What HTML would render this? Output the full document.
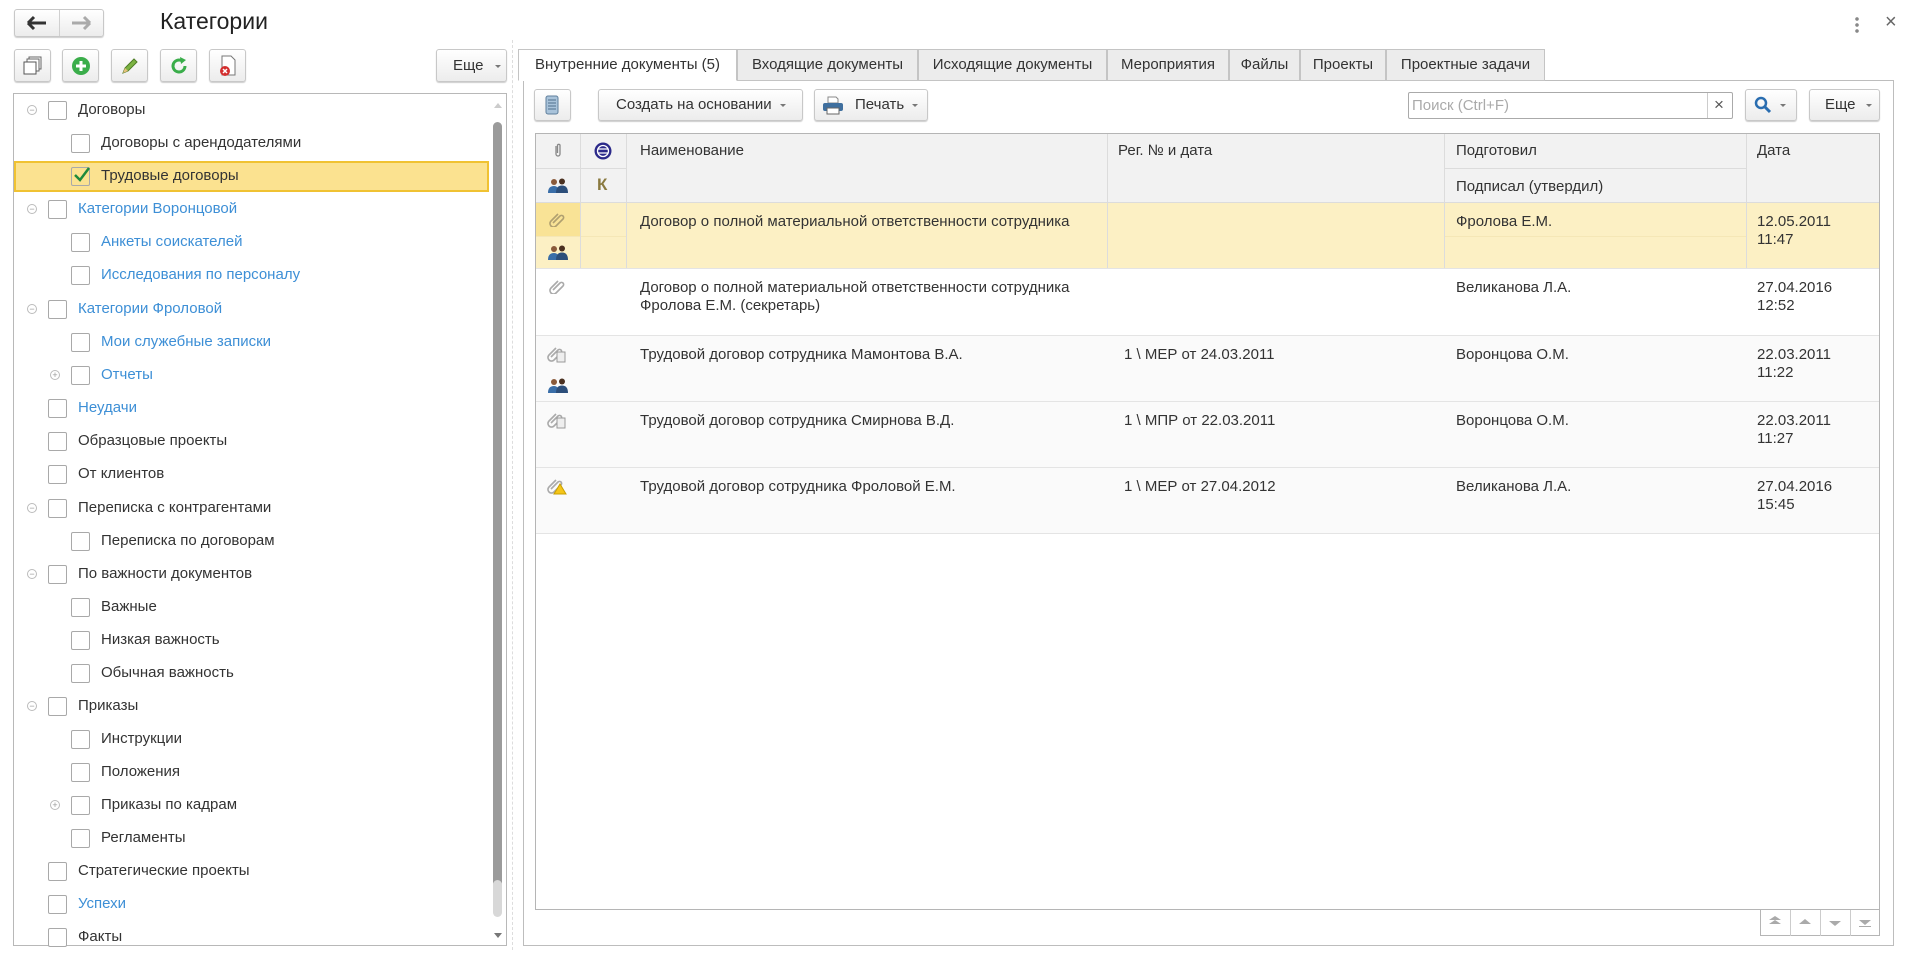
<!DOCTYPE html>
<html><head><meta charset="utf-8"><style>
*{box-sizing:border-box;margin:0;padding:0}
body{width:1909px;height:955px;background:#fff;position:relative;overflow:hidden;font-family:"Liberation Sans",Arial,sans-serif;color:#333;font-size:15px}
.a{position:absolute}
.btn{position:absolute;border:1px solid #c8c8c8;border-radius:3px;background:linear-gradient(#fff,#ececec);box-shadow:0 1px 1px rgba(0,0,0,.2)}
.cb{position:absolute;width:19px;height:19px;border:1px solid #a9a9a9;border-radius:2px;background:#fff}
.tr{position:absolute;font-size:15px;color:#333;white-space:nowrap}
.blue{color:#3d8fd6}
.exp{position:absolute;width:10px;height:10px;border:1px solid #bbb;border-radius:50%;font-size:9px;line-height:8px;text-align:center;color:#999}
.tab{position:absolute;top:49px;height:32px;border:1px solid #c4c4c4;background:#ececec;font-size:15px;line-height:30px;text-align:center;color:#333}
.dd{display:inline-block;width:0;height:0;border-left:3px solid transparent;border-right:3px solid transparent;border-top:3px solid #777;vertical-align:middle;margin-left:8px}
.cell{position:absolute;font-size:15px;color:#333;white-space:nowrap;line-height:18px}
.hl{position:absolute;background:#dcdcdc}
</style></head><body>

<div class="btn" style="left:14px;top:9px;width:90px;height:28px"></div>
<div class="a" style="left:59px;top:10px;width:1px;height:26px;background:#d0d0d0"></div>
<svg class="a" style="left:26px;top:15px" width="22" height="16"><path d="M2 8H20M2 8L8 2M2 8L8 14" stroke="#333" stroke-width="3" fill="none"/></svg>
<svg class="a" style="left:70px;top:15px" width="22" height="16"><path d="M2 8H20M20 8L14 2M20 8L14 14" stroke="#aaa" stroke-width="3" fill="none"/></svg>
<div class="a" style="left:160px;top:8px;font-size:23px;color:#222">Категории</div>
<div class="a" style="left:1855px;top:16px;width:4px;height:18px;background:radial-gradient(circle,#888 1.6px,transparent 2px) 0 0/4px 6px"></div>
<div class="a" style="left:1885px;top:11px;font-size:20px;color:#666">×</div>

<div class="btn" style="left:14px;top:49px;width:37px;height:33px"></div>
<svg class="a" style="left:23px;top:56px" width="20" height="20"><rect x="6" y="1" width="12" height="12" fill="#fff" stroke="#666"/><rect x="4" y="3" width="12" height="12" fill="#fff" stroke="#666"/><rect x="1" y="6" width="12" height="12" fill="#fff" stroke="#555"/></svg>
<div class="btn" style="left:62px;top:49px;width:37px;height:33px"></div>
<svg class="a" style="left:71px;top:56px" width="20" height="20"><circle cx="10" cy="10" r="9" fill="#3aad4a"/><path d="M10 5V15M5 10H15" stroke="#fff" stroke-width="3"/></svg>
<div class="btn" style="left:111px;top:49px;width:37px;height:33px"></div>
<svg class="a" style="left:120px;top:56px" width="20" height="20"><path d="M3 17L5 12L14 3L17 6L8 15Z" fill="#7cb342" stroke="#4e7d25"/><path d="M3 17L5 12L8 15Z" fill="#e8c07d"/></svg>
<div class="btn" style="left:160px;top:49px;width:37px;height:33px"></div>
<svg class="a" style="left:169px;top:56px" width="20" height="20"><path d="M16 10A6 6 0 1 1 13 4.8" stroke="#3aad4a" stroke-width="3" fill="none"/><path d="M11 1L17 4L12 8Z" fill="#3aad4a"/></svg>
<div class="btn" style="left:209px;top:49px;width:37px;height:33px"></div>
<svg class="a" style="left:218px;top:55px" width="20" height="22"><path d="M4 1H13L17 5V20H4Z" fill="#fff" stroke="#777"/><circle cx="7" cy="16" r="5" fill="#d32f2f"/><path d="M5 14L9 18M9 14L5 18" stroke="#fff" stroke-width="1.5"/></svg>
<div class="btn" style="left:436px;top:49px;width:71px;height:33px;font-size:15px;line-height:31px;padding-left:16px">Еще<span class="dd" style="margin-left:11px"></span></div>

<div class="a" style="left:13px;top:93px;width:494px;height:853px;border:1px solid #b8b8b8"></div>
<div class="a" style="left:14px;top:161px;width:475px;height:31px;background:#fbe290;border:2px solid #f0c232"></div>
<div class="a" style="left:493px;top:122px;width:9px;height:765px;background:#9b9b9b;border-radius:5px"></div>
<div class="a" style="left:493px;top:880px;width:9px;height:37px;background:#d8d8d8;border-radius:5px"></div>
<div class="a" style="left:494px;top:103px;width:0;height:0;border-left:4px solid transparent;border-right:4px solid transparent;border-bottom:5px solid #ccc"></div>
<div class="a" style="left:494px;top:933px;width:0;height:0;border-left:4px solid transparent;border-right:4px solid transparent;border-top:5px solid #777"></div>
<div class="a" style="left:512px;top:40px;width:0;height:910px;border-left:1px dashed #ddd"></div>

<div class="exp" style="left:27px;top:105px">−</div><div class="cb" style="left:48px;top:101px"></div><div class="tr" style="left:78px;top:101px">Договоры</div>
<div class="cb" style="left:71px;top:134px"></div><div class="tr" style="left:101px;top:134px">Договоры с арендодателями</div>
<div class="cb" style="left:71px;top:167px;background:transparent"></div><svg class="a" style="left:72px;top:165px" width="20" height="20"><path d="M3 10L8 15L17 3" stroke="#1e8a3c" stroke-width="2.5" fill="none"/></svg><div class="tr" style="left:101px;top:167px">Трудовые договоры</div>
<div class="exp" style="left:27px;top:204px">−</div><div class="cb" style="left:48px;top:200px"></div><div class="tr blue" style="left:78px;top:200px">Категории Воронцовой</div>
<div class="cb" style="left:71px;top:233px"></div><div class="tr blue" style="left:101px;top:233px">Анкеты соискателей</div>
<div class="cb" style="left:71px;top:266px"></div><div class="tr blue" style="left:101px;top:266px">Исследования по персоналу</div>
<div class="exp" style="left:27px;top:304px">−</div><div class="cb" style="left:48px;top:300px"></div><div class="tr blue" style="left:78px;top:300px">Категории Фроловой</div>
<div class="cb" style="left:71px;top:333px"></div><div class="tr blue" style="left:101px;top:333px">Мои служебные записки</div>
<div class="exp" style="left:50px;top:370px">+</div><div class="cb" style="left:71px;top:366px"></div><div class="tr blue" style="left:101px;top:366px">Отчеты</div>
<div class="cb" style="left:48px;top:399px"></div><div class="tr blue" style="left:78px;top:399px">Неудачи</div>
<div class="cb" style="left:48px;top:432px"></div><div class="tr" style="left:78px;top:432px">Образцовые проекты</div>
<div class="cb" style="left:48px;top:465px"></div><div class="tr" style="left:78px;top:465px">От клиентов</div>
<div class="exp" style="left:27px;top:503px">−</div><div class="cb" style="left:48px;top:499px"></div><div class="tr" style="left:78px;top:499px">Переписка с контрагентами</div>
<div class="cb" style="left:71px;top:532px"></div><div class="tr" style="left:101px;top:532px">Переписка по договорам</div>
<div class="exp" style="left:27px;top:569px">−</div><div class="cb" style="left:48px;top:565px"></div><div class="tr" style="left:78px;top:565px">По важности документов</div>
<div class="cb" style="left:71px;top:598px"></div><div class="tr" style="left:101px;top:598px">Важные</div>
<div class="cb" style="left:71px;top:631px"></div><div class="tr" style="left:101px;top:631px">Низкая важность</div>
<div class="cb" style="left:71px;top:664px"></div><div class="tr" style="left:101px;top:664px">Обычная важность</div>
<div class="exp" style="left:27px;top:701px">−</div><div class="cb" style="left:48px;top:697px"></div><div class="tr" style="left:78px;top:697px">Приказы</div>
<div class="cb" style="left:71px;top:730px"></div><div class="tr" style="left:101px;top:730px">Инструкции</div>
<div class="cb" style="left:71px;top:763px"></div><div class="tr" style="left:101px;top:763px">Положения</div>
<div class="exp" style="left:50px;top:800px">+</div><div class="cb" style="left:71px;top:796px"></div><div class="tr" style="left:101px;top:796px">Приказы по кадрам</div>
<div class="cb" style="left:71px;top:829px"></div><div class="tr" style="left:101px;top:829px">Регламенты</div>
<div class="cb" style="left:48px;top:862px"></div><div class="tr" style="left:78px;top:862px">Стратегические проекты</div>
<div class="cb" style="left:48px;top:895px"></div><div class="tr blue" style="left:78px;top:895px">Успехи</div>
<div class="cb" style="left:48px;top:928px"></div><div class="tr" style="left:78px;top:928px">Факты</div>

<div class="a" style="left:523px;top:80px;width:1371px;height:866px;border:1px solid #bdbdbd"></div>
<div class="tab" style="left:518px;width:219px;background:#fff;border-bottom-color:#fff">Внутренние документы (5)</div>
<div class="tab" style="left:737px;width:181px">Входящие документы</div>
<div class="tab" style="left:918px;width:189px">Исходящие документы</div>
<div class="tab" style="left:1107px;width:122px">Мероприятия</div>
<div class="tab" style="left:1229px;width:71px">Файлы</div>
<div class="tab" style="left:1300px;width:86px">Проекты</div>
<div class="tab" style="left:1386px;width:159px">Проектные задачи</div>

<div class="btn" style="left:534px;top:89px;width:37px;height:32px"></div>
<svg class="a" style="left:545px;top:95px" width="14" height="20"><rect x="1" y="1" width="12" height="18" rx="2" fill="#a9c3da" stroke="#5f7f9c"/><path d="M3 5H11M3 8H11M3 11H11M3 14H11" stroke="#4f6f8c"/></svg>
<div class="btn" style="left:598px;top:89px;width:205px;height:32px;font-size:15px;line-height:30px;padding-left:17px">Создать на основании<span class="dd"></span></div>
<div class="btn" style="left:814px;top:89px;width:114px;height:32px;font-size:15px;line-height:30px;padding-left:40px">Печать<span class="dd"></span></div>
<svg class="a" style="left:822px;top:96px" width="22" height="19"><path d="M6 1H14L16 3V7H6Z" fill="#fff" stroke="#888"/><rect x="1" y="7" width="20" height="8" rx="2" fill="#3f6f9e"/><rect x="5" y="12" width="12" height="6" fill="#fff" stroke="#666"/></svg>
<div class="a" style="left:1408px;top:92px;width:325px;height:27px;border:1px solid #aaa;border-radius:2px;font-size:15px;line-height:25px;color:#aaa;padding-left:3px">Поиск (Ctrl+F)</div>
<div class="a" style="left:1707px;top:93px;width:1px;height:25px;background:#ccc"></div>
<div class="a" style="left:1714px;top:95px;font-size:17px;color:#555">×</div>
<div class="btn" style="left:1745px;top:89px;width:52px;height:32px"></div>
<svg class="a" style="left:1754px;top:96px" width="18" height="18"><circle cx="7" cy="7" r="5" stroke="#2a6db0" stroke-width="2.5" fill="none"/><path d="M10.5 10.5L16 16" stroke="#2a6db0" stroke-width="3"/></svg>
<div class="a" style="left:1780px;top:104px;width:0;height:0;border-left:3px solid transparent;border-right:3px solid transparent;border-top:3px solid #777"></div>
<div class="btn" style="left:1809px;top:89px;width:71px;height:32px;font-size:15px;line-height:30px;padding-left:15px">Еще<span class="dd" style="margin-left:10px"></span></div>

<div class="a" style="left:535px;top:133px;width:1345px;height:777px;border:1px solid #b5b5b5"></div>
<div class="a" style="left:536px;top:134px;width:1343px;height:69px;background:#f2f2f2"></div>
<div class="a" style="left:536px;top:203px;width:1343px;height:65px;background:#fcf0c4"></div>
<div class="a" style="left:536px;top:203px;width:44px;height:33px;background:#f9e396"></div>
<div class="a" style="left:536px;top:335px;width:1343px;height:198px;background:#fafafa"></div>
<div class="hl" style="left:536px;top:202px;width:1343px;height:1px"></div>
<div class="hl" style="left:536px;top:268px;width:1343px;height:1px;background:#e4e4e4"></div>
<div class="hl" style="left:536px;top:335px;width:1343px;height:1px;background:#e4e4e4"></div>
<div class="hl" style="left:536px;top:401px;width:1343px;height:1px;background:#e4e4e4"></div>
<div class="hl" style="left:536px;top:467px;width:1343px;height:1px;background:#e4e4e4"></div>
<div class="hl" style="left:536px;top:533px;width:1343px;height:1px;background:#e4e4e4"></div>
<div class="hl" style="left:536px;top:168px;width:90px;height:1px"></div>
<div class="hl" style="left:1444px;top:168px;width:302px;height:1px"></div>
<div class="hl" style="left:536px;top:236px;width:90px;height:1px;background:#f5e7b6"></div>
<div class="hl" style="left:1444px;top:236px;width:302px;height:1px;background:#f5e7b6"></div>
<div class="hl" style="left:580px;top:134px;width:1px;height:134px"></div>
<div class="hl" style="left:626px;top:134px;width:1px;height:134px"></div>
<div class="hl" style="left:1107px;top:134px;width:1px;height:134px"></div>
<div class="hl" style="left:1444px;top:134px;width:1px;height:134px"></div>
<div class="hl" style="left:1746px;top:134px;width:1px;height:134px"></div>

<svg class="a" style="left:553px;top:142px" width="10" height="16"><path d="M3 4V12A2 2 0 0 0 7 12V3A1.5 1.5 0 0 0 4.5 3V11" stroke="#888" stroke-width="1.3" fill="none"/></svg>
<svg class="a" style="left:593px;top:141px" width="20" height="20"><circle cx="10" cy="10" r="8.5" fill="#2c2a8a"/><circle cx="10" cy="10" r="5.5" fill="none" stroke="#fff" stroke-width="1.3"/><path d="M5 8H15M5 12H15" stroke="#fff" stroke-width="1.3"/></svg>
<svg class="a" style="left:547px;top:177px" width="22" height="18"><circle cx="7" cy="5" r="3" fill="#8a5a3a"/><path d="M1 16Q1 9 7 9Q12 9 12 16Z" fill="#3a6ea8"/><circle cx="15" cy="4.5" r="3" fill="#4a3020"/><path d="M9 16Q9 8.5 15 8.5Q21 8.5 21 16Z" fill="#2c4e7a"/></svg>
<div class="a" style="left:597px;top:175px;font-size:17px;font-weight:bold;color:#8a7a40">К</div>
<div class="cell" style="left:640px;top:142px">Наименование</div>
<div class="cell" style="left:1118px;top:142px">Рег. № и дата</div>
<div class="cell" style="left:1456px;top:142px">Подготовил</div>
<div class="cell" style="left:1456px;top:178px">Подписал (утвердил)</div>
<div class="cell" style="left:1757px;top:142px">Дата</div>

<svg class="a" style="left:549px;top:211px" width="16" height="16"><path d="M4 12L11 5A2 2 0 0 1 14 8L7 15A3.5 3.5 0 0 1 2 10L9 3" stroke="#b0a070" stroke-width="1.6" fill="none"/></svg>
<svg class="a" style="left:547px;top:244px" width="22" height="18"><circle cx="7" cy="5" r="3" fill="#8a5a3a"/><path d="M1 16Q1 9 7 9Q12 9 12 16Z" fill="#3a6ea8"/><circle cx="15" cy="4.5" r="3" fill="#4a3020"/><path d="M9 16Q9 8.5 15 8.5Q21 8.5 21 16Z" fill="#2c4e7a"/></svg>
<div class="cell" style="left:640px;top:213px">Договор о полной материальной ответственности сотрудника</div>
<div class="cell" style="left:1456px;top:213px">Фролова Е.М.</div>
<div class="cell" style="left:1757px;top:213px">12.05.2011<br>11:47</div>

<svg class="a" style="left:549px;top:278px" width="16" height="16"><path d="M4 12L11 5A2 2 0 0 1 14 8L7 15A3.5 3.5 0 0 1 2 10L9 3" stroke="#aaa" stroke-width="1.6" fill="none"/></svg>
<div class="cell" style="left:640px;top:279px">Договор о полной материальной ответственности сотрудника<br>Фролова Е.М. (секретарь)</div>
<div class="cell" style="left:1456px;top:279px">Великанова Л.А.</div>
<div class="cell" style="left:1757px;top:279px">27.04.2016<br>12:52</div>

<svg class="a" style="left:547px;top:345px" width="20" height="18"><path d="M4 12L11 5A2 2 0 0 1 14 8L7 15A3.5 3.5 0 0 1 2 10L9 3" stroke="#aaa" stroke-width="1.6" fill="none"/><rect x="10" y="7" width="8" height="10" fill="#eee" stroke="#999"/></svg>
<svg class="a" style="left:547px;top:377px" width="22" height="18"><circle cx="7" cy="5" r="3" fill="#8a5a3a"/><path d="M1 16Q1 9 7 9Q12 9 12 16Z" fill="#3a6ea8"/><circle cx="15" cy="4.5" r="3" fill="#4a3020"/><path d="M9 16Q9 8.5 15 8.5Q21 8.5 21 16Z" fill="#2c4e7a"/></svg>
<div class="cell" style="left:640px;top:346px">Трудовой договор сотрудника Мамонтова В.А.</div>
<div class="cell" style="left:1124px;top:346px">1 \ МЕР от 24.03.2011</div>
<div class="cell" style="left:1456px;top:346px">Воронцова О.М.</div>
<div class="cell" style="left:1757px;top:346px">22.03.2011<br>11:22</div>

<svg class="a" style="left:547px;top:411px" width="20" height="18"><path d="M4 12L11 5A2 2 0 0 1 14 8L7 15A3.5 3.5 0 0 1 2 10L9 3" stroke="#aaa" stroke-width="1.6" fill="none"/><rect x="10" y="7" width="8" height="10" fill="#eee" stroke="#999"/></svg>
<div class="cell" style="left:640px;top:412px">Трудовой договор сотрудника Смирнова В.Д.</div>
<div class="cell" style="left:1124px;top:412px">1 \ МПР от 22.03.2011</div>
<div class="cell" style="left:1456px;top:412px">Воронцова О.М.</div>
<div class="cell" style="left:1757px;top:412px">22.03.2011<br>11:27</div>

<svg class="a" style="left:547px;top:477px" width="20" height="18"><path d="M4 12L11 5A2 2 0 0 1 14 8L7 15A3.5 3.5 0 0 1 2 10L9 3" stroke="#aaa" stroke-width="1.6" fill="none"/><path d="M13 7L19 17H7Z" fill="#f5c518" stroke="#c9a000"/></svg>
<div class="cell" style="left:640px;top:478px">Трудовой договор сотрудника Фроловой Е.М.</div>
<div class="cell" style="left:1124px;top:478px">1 \ МЕР от 27.04.2012</div>
<div class="cell" style="left:1456px;top:478px">Великанова Л.А.</div>
<div class="cell" style="left:1757px;top:478px">27.04.2016<br>15:45</div>

<div class="a" style="left:1760px;top:910px;width:120px;height:26px;border:1px solid #b5b5b5;border-top:none;background:#fff"></div>
<div class="a" style="left:1790px;top:910px;width:1px;height:26px;background:#ccc"></div>
<div class="a" style="left:1820px;top:910px;width:1px;height:26px;background:#ccc"></div>
<div class="a" style="left:1850px;top:910px;width:1px;height:26px;background:#ccc"></div>
<svg class="a" style="left:1760px;top:910px" width="120" height="26"><path d="M9 10H21L15 6Z M9 14H21L15 10Z" fill="#aaa"/><path d="M39 14H51L45 9Z" fill="#aaa"/><path d="M69 11H81L75 16Z" fill="#aaa"/><path d="M99 10H111L105 15Z M99 16H111V17H99Z" fill="#aaa"/></svg>
</body></html>
